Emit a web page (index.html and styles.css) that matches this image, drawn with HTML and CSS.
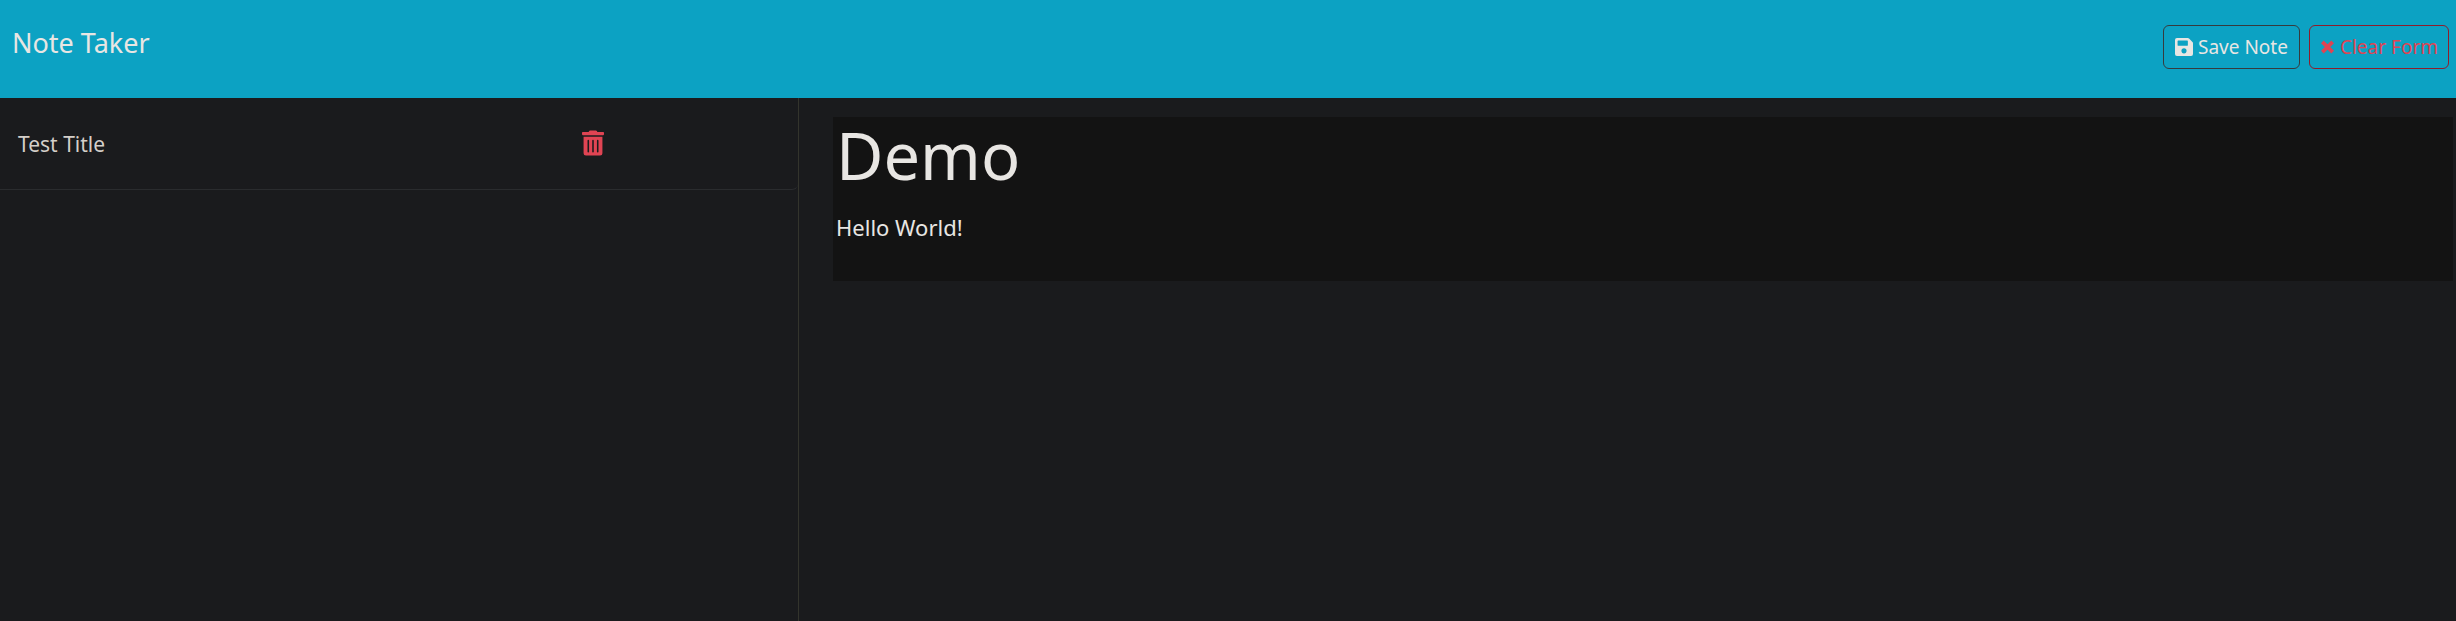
FILE: index.html
```html
<!DOCTYPE html>
<html lang="en">
<head>
<meta charset="utf-8">
<title>Note Taker</title>
<link rel="stylesheet" href="styles.css">
</head>
<body>
<nav class="navbar">
  <a class="brand" href="#">Note Taker</a>
  <div class="actions">
    <button class="btn btn-save" type="button">
      <svg class="icon-save" viewBox="0 0 448 448" aria-hidden="true"><path fill-rule="evenodd" d="M434 98 350 14A48 48 0 0 0 316 0H48A48 48 0 0 0 0 48V400a48 48 0 0 0 48 48H400a48 48 0 0 0 48-48V132a48 48 0 0 0-14-34ZM224 384a64 64 0 1 1 0-128 64 64 0 0 1 0 128ZM320 80V180a12 12 0 0 1-12 12H76a12 12 0 0 1-12-12V76a12 12 0 0 1 12-12H305q15 0 15 16Z"/></svg>
      <span>Save Note</span>
    </button>
    <button class="btn btn-clear" type="button">
      <svg class="icon-clear" viewBox="0 0 16 16" aria-hidden="true"><path d="M2.5 2.5 13.5 13.5M13.5 2.5 2.5 13.5"/></svg>
      <span>Clear Form</span>
    </button>
  </div>
</nav>
<main class="layout">
  <aside class="sidebar">
    <ul class="notes">
      <li class="note">
        <span class="note-name">Test Title</span>
        <button class="delete" type="button" aria-label="Delete note">
          <svg class="icon-trash" viewBox="0 0 448 512" aria-hidden="true"><path fill-rule="evenodd" d="M32 464a48 48 0 0 0 48 48H368a48 48 0 0 0 48-48V128H32ZM304 208a16 16 0 0 1 32 0V432a16 16 0 0 1-32 0ZM208 208a16 16 0 0 1 32 0V432a16 16 0 0 1-32 0ZM112 208a16 16 0 0 1 32 0V432a16 16 0 0 1-32 0ZM432 32H312L303 13A24 24 0 0 0 281 0H167A24 24 0 0 0 145 13L136 32H16A16 16 0 0 0 0 48V80A16 16 0 0 0 16 96H432A16 16 0 0 0 448 80V48A16 16 0 0 0 432 32Z"/></svg>
        </button>
      </li>
    </ul>
  </aside>
  <section class="editor">
    <div class="fields">
      <input class="title" type="text" value="Demo" aria-label="Note title">
      <textarea class="text" aria-label="Note text">Hello World!</textarea>
    </div>
  </section>
</main>
</body>
</html>
```
FILE: styles.css
```css
* { box-sizing: border-box; }
body {
  margin: 0;
  min-height: 100vh;
  display: flex;
  flex-direction: column;
  background: #1a1b1d;
  color: #e8e6e3;
  font-family: "Segoe UI", "Noto Sans", sans-serif;
  font-size: 21px;
  line-height: 32px;
}
.navbar {
  display: flex;
  justify-content: space-between;
  align-items: flex-start;
  height: 98px;
  padding: 25px 7px 0 12px;
  background: #0ca2c3;
}
.brand {
  color: #e8e6e3;
  font-size: 27px;
  line-height: 36px;
  text-decoration: none;
}
.actions { display: flex; gap: 9px; }
.btn {
  display: flex;
  align-items: center;
  height: 44px;
  padding: 0 11px;
  border: 1px solid #363b3d;
  border-radius: 6px;
  background: none;
  color: #e8e6e3;
  font: 19px/28px "Segoe UI", "Noto Sans", sans-serif;
  gap: 5px;
}
.btn-clear { padding: 0 10px; border-color: #8f1d2c; color: #e04453; }
.icon-save { width: 18px; height: 18px; fill: currentColor; }
.icon-clear { width: 15px; height: 16px; stroke: currentColor; stroke-width: 4; }
.layout {
  flex: 1;
  display: grid;
  grid-template-columns: 799px 1fr;
}
.sidebar { border-right: 1px solid #33342c; }
.notes { margin: 0; padding: 0; list-style: none; }
.note {
  display: grid;
  grid-template-columns: 582px auto;
  align-items: center;
  justify-content: start;
  height: 92px;
  border-bottom: 1px solid #2a2c2e;
  border-radius: 0 0 6px 0;
}
.note-name { padding-left: 18px; color: #d4cfc9; }
.delete {
  display: flex;
  padding: 0 0 2px;
  border: 0;
  background: none;
  color: #e04453;
}
.icon-trash { width: 22px; height: 26px; fill: currentColor; }
.editor { padding: 19px 3px 0 34px; }
.fields {
  display: flex;
  flex-direction: column;
  height: 164px;
  padding: 0 3px;
  background: #131313;
}
.title, .text {
  display: block;
  width: 100%;
  padding: 0;
  border: 0;
  outline: 0;
  background: none;
  color: #e8e6e3;
  font-family: "Segoe UI", "Noto Sans", sans-serif;
}
.title { height: 76px; font-size: 65px; line-height: 76px; }
.text {
  height: 64px;
  margin-top: 18px;
  font-size: 22px;
  line-height: 32px;
  resize: none;
  overflow: hidden;
}
```
